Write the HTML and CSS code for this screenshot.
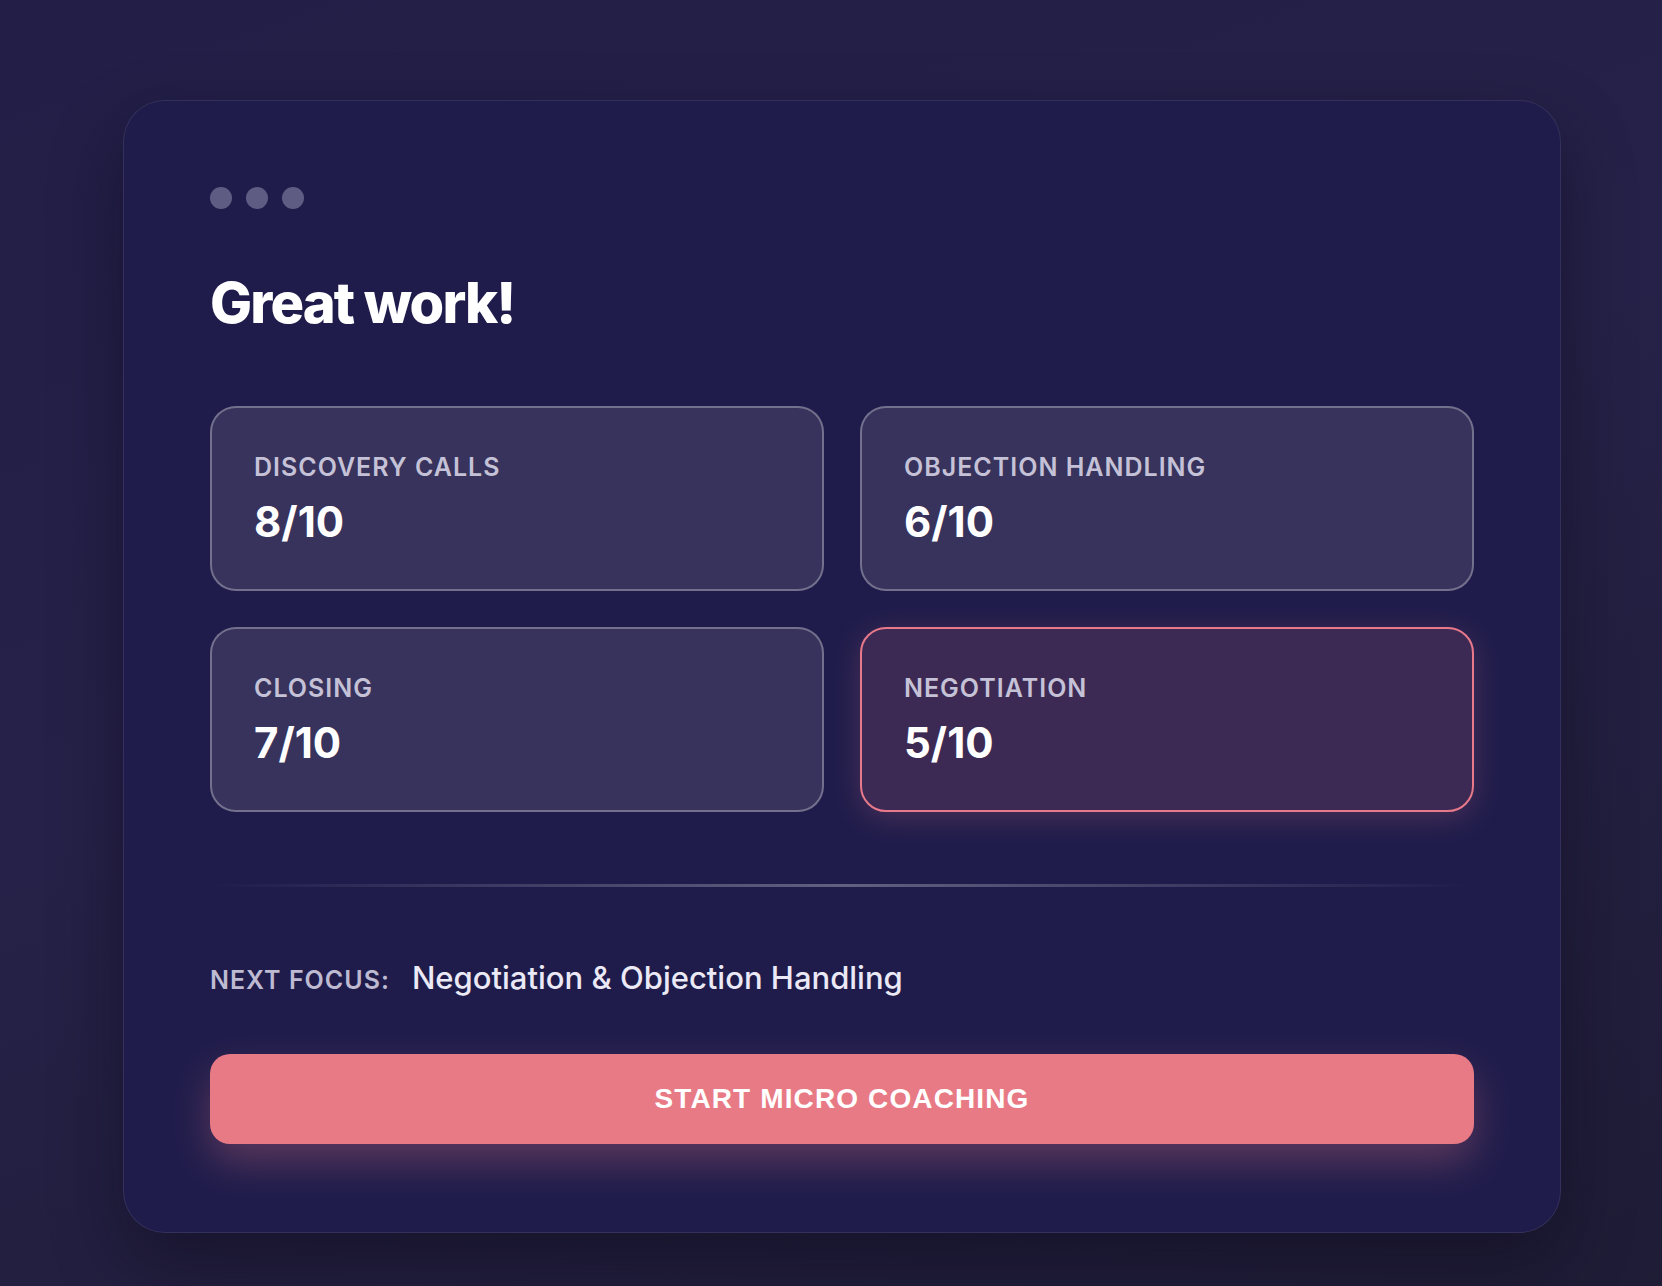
FILE: index.html
```html
<!DOCTYPE html>
<html lang="en">
<head>
<meta charset="utf-8">
<title>Great work!</title>
<link rel="stylesheet" href="styles.css">
</head>
<body>
<main class="card">
  <div class="dots"><span class="dot"></span><span class="dot"></span><span class="dot"></span></div>
  <h1 class="title">Great work!</h1>
  <section class="grid">
    <div class="tile">
      <div class="tile-label">Discovery Calls</div>
      <div class="tile-value">8/10</div>
    </div>
    <div class="tile">
      <div class="tile-label">Objection Handling</div>
      <div class="tile-value">6/10</div>
    </div>
    <div class="tile">
      <div class="tile-label">Closing</div>
      <div class="tile-value">7/10</div>
    </div>
    <div class="tile tile-focus">
      <div class="tile-label">Negotiation</div>
      <div class="tile-value">5/10</div>
    </div>
  </section>
  <div class="divider"></div>
  <div class="next">
    <span class="next-label">Next focus:</span>
    <span class="next-value">Negotiation &amp; Objection Handling</span>
  </div>
  <button class="cta">START MICRO COACHING</button>
</main>
</body>
</html>
```

FILE: styles.css
```css
* { box-sizing: border-box; }
html, body { margin: 0; }
body {
  min-height: 1286px;
  padding: 100px 101px 54px 123px;
  background: linear-gradient(160deg, #221e47 0%, #262148 45%, #1f1c36 100%);
  font-family: "Inter", "Noto Sans", sans-serif;
  color: #fff;
}
.card {
  width: 1438px;
  background: #1f1c4b;
  border: 1px solid rgba(255,255,255,0.09);
  border-radius: 42px;
  padding: 86px 86px 88px;
  box-shadow: 0 30px 70px rgba(10, 8, 25, 0.45);
}
.dots { display: flex; gap: 14px; height: 22px; }
.dot { width: 22px; height: 22px; border-radius: 50%; background: #5f5c84; }
.title {
  margin: 61px 0 0;
  font-size: 56px;
  line-height: 1.2;
  font-weight: 800;
  letter-spacing: -0.033em;
}
.grid {
  margin-top: 69px;
  display: grid;
  grid-template-columns: 1fr 1fr;
  column-gap: 36px;
  row-gap: 36px;
}
.tile {
  background: #37335c;
  border: 2px solid rgba(255,255,255,0.3);
  border-radius: 26px;
  padding: 44px 42px 42px;
}
.tile-focus {
  background: #3d2a54;
  border-color: #e8798a;
  box-shadow: 0 6px 30px rgba(232, 121, 138, 0.22);
}
.tile-label {
  font-size: 25px;
  line-height: 30px;
  font-weight: 600;
  text-transform: uppercase;
  letter-spacing: 0.04em;
  color: #c5c2d7;
}
.tile-value {
  margin-top: 15px;
  font-size: 42px;
  line-height: 50px;
  font-weight: 700;
}
.divider {
  margin: 72px 0;
  height: 3px;
  background: linear-gradient(90deg, rgba(255,255,255,0) 0%, rgba(255,255,255,0.3) 50%, rgba(255,255,255,0) 100%);
}
.next { display: flex; align-items: baseline; gap: 22px; }
.next-label {
  font-size: 25px;
  font-weight: 600;
  text-transform: uppercase;
  letter-spacing: 0.04em;
  color: #bdbad2;
}
.next-value {
  font-size: 31px;
  line-height: 1.2;
  font-weight: 500;
  color: #ebe9f5;
}
.cta {
  display: block;
  width: 100%;
  height: 90px;
  margin-top: 58px;
  border: 0;
  border-radius: 20px;
  background: #e87a86;
  color: #fff;
  font-family: "Liberation Sans", Arial, sans-serif;
  font-weight: 700;
  font-size: 28px;
  letter-spacing: 0.04em;
  box-shadow: 0 18px 40px rgba(232, 122, 134, 0.3);
}
```
